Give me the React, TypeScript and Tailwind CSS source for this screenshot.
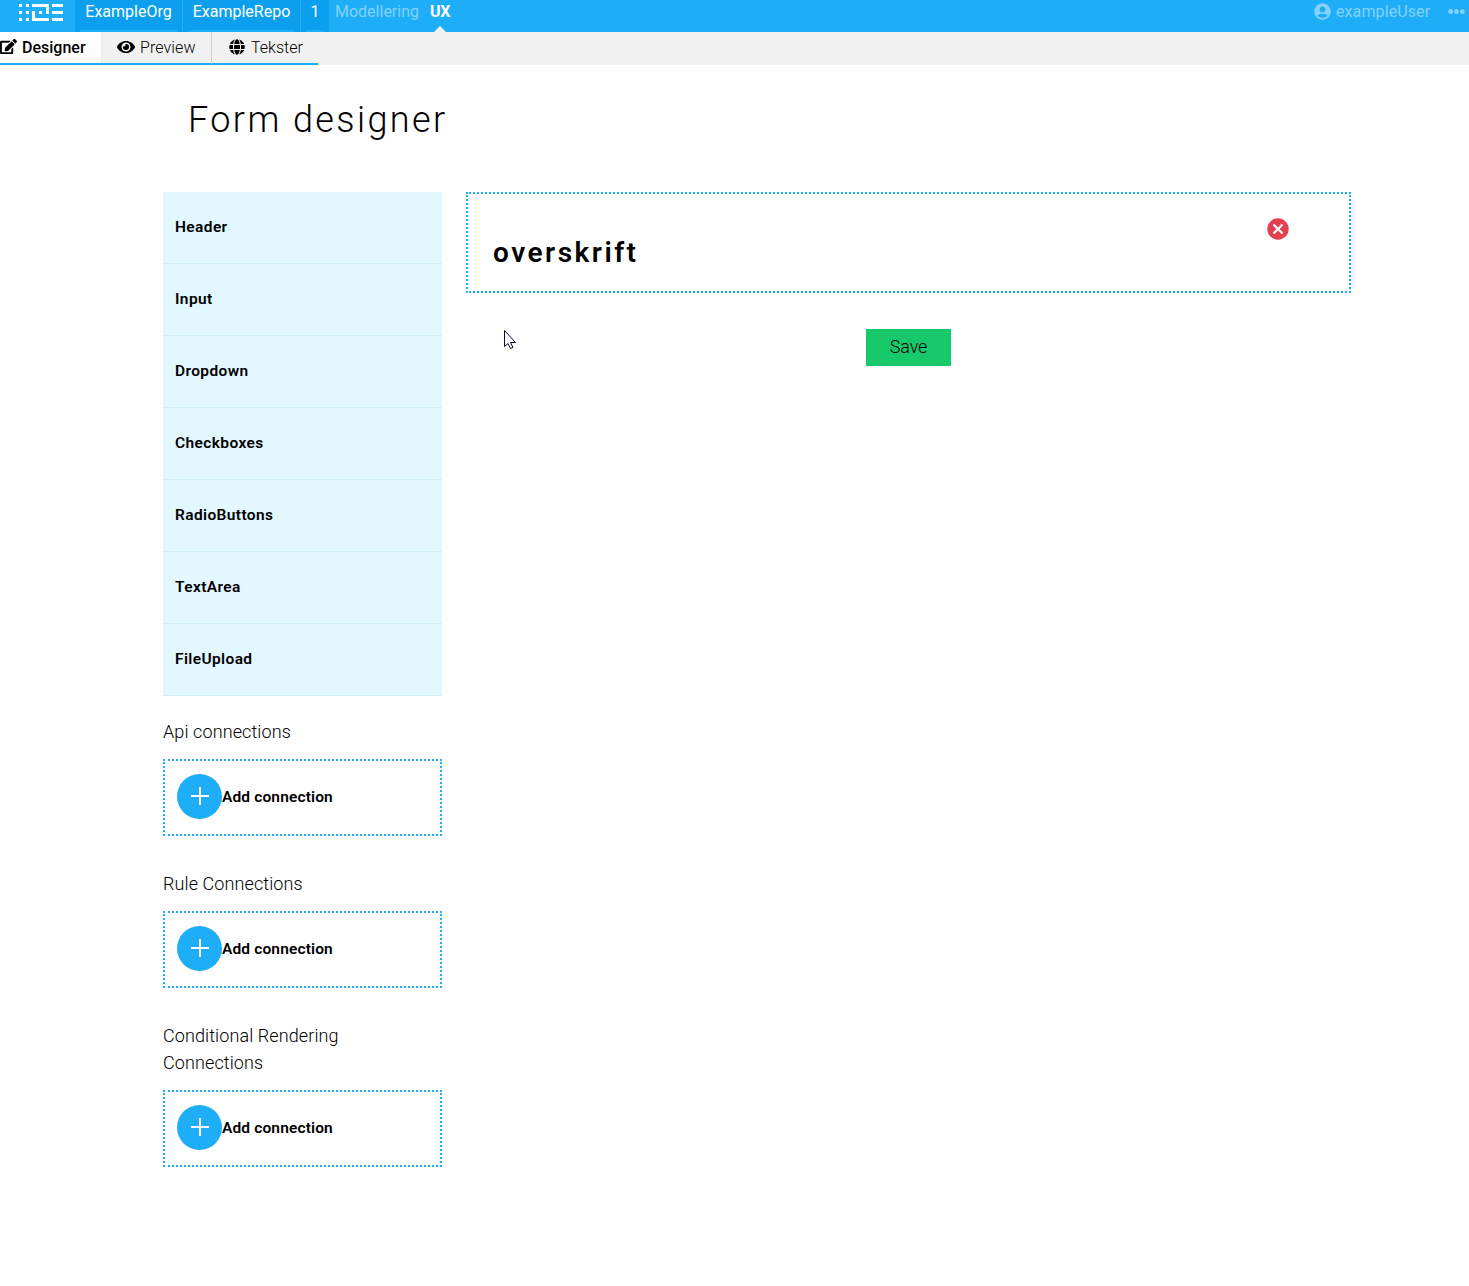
import type { ReactNode } from "react";
import { FaEdit, FaEllipsisH, FaEye, FaGlobe, FaUserCircle } from "react-icons/fa";

const COMPONENTS = ["Header", "Input", "Dropdown", "Checkboxes", "RadioButtons", "TextArea", "FileUpload"];

const CONNECTIONS = ["Api connections", "Rule Connections", "Conditional Rendering Connections"];

function Logo() {
  return (
    <svg width="45" height="18" viewBox="0 0 45 18" fill="#fff" className="block" shapeRendering="crispEdges">
      <path d="M0 0h3v3H0zM7 0h3v3H7zM0 7h3v3H0zM7 7h3v3H7zM0 14h3v3H0zM7 14h3v3H7z" />
      <path d="M13 0h17v10h-3V3H13zM13 7h3v7h14v3H13zM20 7h3v3h-3z" />
      <path d="M33 0h11v3H33zM33 7h11v3H33zM33 14h11v3H33z" />
    </svg>
  );
}

function Crumb({ className, children }: { className: string; children: ReactNode }) {
  return (
    <div className={`flex h-8 flex-col justify-between bg-[#0c9fed] px-[5px] ${className}`}>
      <span className="h-6 text-center leading-6">{children}</span>
      <span className="h-[2px] bg-[#1eaef7]" />
    </div>
  );
}

function AddConnection({ title }: { title: string }) {
  return (
    <section>
      <h2 className="w-[230px] text-[18px] leading-[27px] font-light tracking-[0.1px]">{title}</h2>
      <div className="mt-[14px] flex h-[77px] items-start border-2 border-dotted border-[#1eaef7] pt-[13px] pl-3">
        <span className="flex size-[45px] items-center justify-center rounded-full bg-[#1eaef7]">
          <svg width="19" height="20" viewBox="0 0 19 20" stroke="#fff" strokeWidth="2" className="block">
            <path d="M10 0v18M1 9h18" />
          </svg>
        </span>
        <span className="text-[15.5px] leading-[47px] font-semibold tracking-[0.14px]">Add connection</span>
      </div>
    </section>
  );
}

export default function App() {
  return (
    <div className="min-h-[1286px] bg-[#fefefe] font-['Roboto','Liberation_Sans',sans-serif] text-black">
      <header className="flex h-8 bg-[#1eaef7] text-[16px] text-white">
        <div className="w-[75px] pt-1 pl-[19px]">
          <Logo />
        </div>
        <Crumb className="w-[107px]">ExampleOrg</Crumb>
        <Crumb className="ml-px w-[117px]">ExampleRepo</Crumb>
        <Crumb className="ml-px w-7">1</Crumb>
        <span className="ml-[6px] w-[95px] leading-6 text-[#85d1fb]">Modellering</span>
        <span className="relative w-5 leading-6 font-bold tracking-[-0.4px]">
          UX
          <svg width="12" height="6" viewBox="0 0 12 6" className="absolute top-[26px] left-1">
            <path d="M0 6L6 0l6 6z" fill="#f1f1f1" />
          </svg>
        </span>
        <div className="ml-auto flex h-6 items-center text-[#85d1fb]">
          <FaUserCircle size={17} className="mt-[-2px]" />
          <span className="ml-[5px] w-[96px] tracking-[0.1px]">exampleUser</span>
          <FaEllipsisH size={17} className="mt-[-2px] mr-1 ml-4" />
        </div>
      </header>

      <nav className="flex h-[33px] bg-[#f1f1f1] text-[16px] leading-8 font-light">
        <div className="flex w-[101px] border-b-2 border-[#1eaef7] bg-white font-medium">
          <FaEdit size={17} className="mt-[6px]" />
          <span className="ml-[5px]">Designer</span>
        </div>
        <div className="flex w-[111px] border-r border-b-2 border-r-[#c8d3d8] border-b-[#1eaef7]">
          <FaEye size={18} className="mt-[6px] ml-4" />
          <span className="ml-[5px] tracking-[0.1px]">Preview</span>
        </div>
        <div className="flex w-[106px] border-b-2 border-[#1eaef7]">
          <FaGlobe size={16} className="mt-[7px] ml-[17px]" />
          <span className="ml-[6px]">Tekster</span>
        </div>
      </nav>

      <main className="pl-[163px]">
        <h1 className="pt-7 pl-[25px] text-[36px] leading-[54px] font-light tracking-[2.4px]">Form designer</h1>
        <div className="mt-[45px] flex items-start">
          <aside className="w-[279px]">
            <ul>
              {COMPONENTS.map((name) => (
                <li
                  key={name}
                  className="h-[72px] border-b border-[#d0effa] bg-[#e2f7fe] pl-3 text-[15.5px] leading-[70px] font-semibold tracking-[0.38px]"
                >
                  {name}
                </li>
              ))}
            </ul>
            <div className="mt-[22px] flex flex-col gap-[34px]">
              {CONNECTIONS.map((title) => (
                <AddConnection key={title} title={title} />
              ))}
            </div>
          </aside>

          <section className="relative ml-6 w-[885px]">
            <div className="flex h-[101px] justify-between border-2 border-dotted border-[#1eaef7] pr-[60px] pl-[25px]">
              <h2 className="pt-[38px] text-[28px] leading-[42px] font-semibold tracking-[2.5px]">overskrift</h2>
              <svg width="22" height="22" viewBox="0 0 22 22" className="mt-6">
                <circle cx="11" cy="11" r="10.7" fill="#e24050" />
                <path d="M6.5 6.5l9 9M15.5 6.5l-9 9" stroke="#fff" strokeWidth="2.2" />
              </svg>
            </div>
            <div className="mt-9 flex justify-center">
              <button className="h-[37px] w-[85px] bg-[#17c96b] pb-[2px] text-[18px] leading-[35px] font-light tracking-[-0.1px]">
                Save
              </button>
            </div>
            <svg width="13" height="20" viewBox="0 0 13 20" className="absolute top-[138px] left-[38px]">
              <path d="M.5.5v16l3.5-3 2.5 5 2.5-1-2.5-5h5z" fill="#fff" stroke="#0b0533" />
            </svg>
          </section>
        </div>
      </main>
    </div>
  );
}
